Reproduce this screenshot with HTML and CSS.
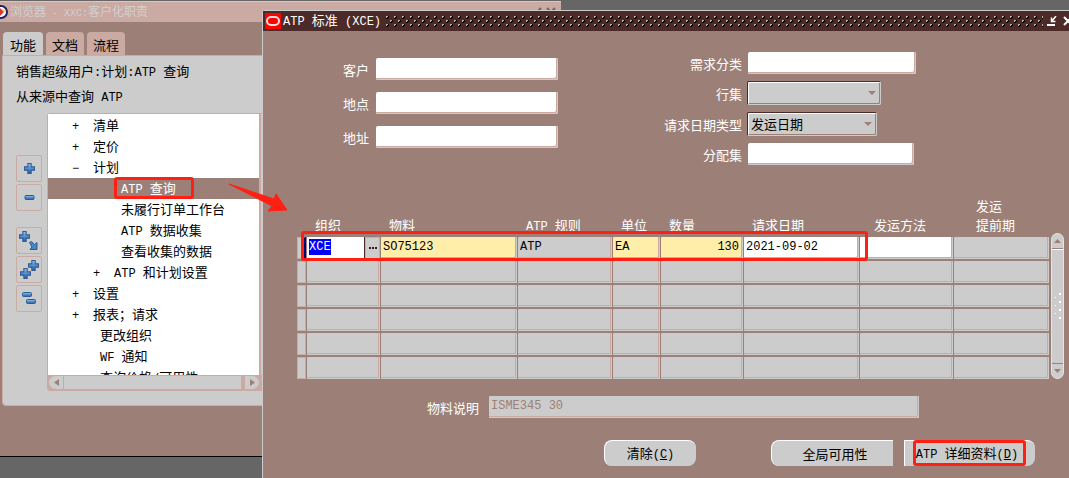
FILE: index.html
```html
<!DOCTYPE html>
<html lang="zh-CN">
<head>
<meta charset="utf-8">
<title>ATP 标准 (XCE)</title>
<link rel="stylesheet" href="styles.css">
</head>
<body>
<svg class="defs" aria-hidden="true">
  <defs>
    <linearGradient id="blue" x1="0" y1="0" x2="0" y2="1"><stop offset="0" stop-color="#9cc4ec"/><stop offset=".6" stop-color="#4a84c4"/><stop offset="1" stop-color="#2a5c9c"/></linearGradient>
    <pattern id="dots" width="8" height="8" patternUnits="userSpaceOnUse">
      <path d="M0 0h2v1h-1v1h-1zM4 4h2v1h-1v1h-1z" fill="#cbaaa2"/>
      <path d="M2 0h1v2h-1v1h-2v-1h1v-1h1zM6 4h1v2h-1v1h-2v-1h1v-1h1z" fill="#000"/>
    </pattern>
    <symbol id="plus" viewBox="0 0 10 10"><path d="M3.500.5h3v3h3v3h-3v3h-3v-3h-3v-3h3z" fill="url(#blue)" stroke="#2f5c94"/></symbol>
    <symbol id="minus" viewBox="0 0 10 5"><rect x=".5" y=".5" width="9" height="4" rx="1" fill="url(#blue)" stroke="#2f5c94"/></symbol>
  </defs>
</svg>
<main class="desktop">
  <section class="window navigator">
    <header class="nav-title">
      <svg class="globe" width="11" height="16" viewBox="0 0 11 16"><circle cx="1" cy="8" r="6" fill="#fff" stroke="#20206a" stroke-width="2"/><path d="M0 4l4 4-4 4z" fill="#d33"/><path d="M2 5l4 2-3 1z" fill="#e5bf35"/></svg>
      <span>浏览器<span class="lt"> - XXC:</span>客户化职责</span>
      <svg class="nav-controls" width="24" height="10" viewBox="0 0 24 10"><path d="M1 9h7M8 1L3 6M14 1l8 8M22 1l-8 8" stroke="#666" stroke-width="2" fill="none"/></svg>
    </header>
    <nav class="tabs">
      <button class="tab active">功能</button><button class="tab">文档</button><button class="tab">流程</button>
    </nav>
    <div class="panel">
      <p>销售超级用户<span class="lt">:</span>计划<span class="lt">:ATP </span>查询</p>
      <p>从来源中查询<span class="lt"> ATP</span></p>
      <div class="browse">
        <div class="tools">
          <button class="tool" aria-label="展开"><svg width="11" height="11"><use href="#plus"/></svg></button>
          <button class="tool" aria-label="折叠"><svg width="11" height="5"><use href="#minus"/></svg></button>
          <button class="tool spaced" aria-label="展开分支"><svg width="20" height="20" viewBox="0 0 20 20"><use href="#plus" width="11" height="11"/><path d="M10.500 11.500l2-1 3 3 2.500-2v7h-7l2-2.500z" fill="#4a84c4" stroke="#2f5c94"/></svg></button>
          <button class="tool" aria-label="全部展开"><svg width="20" height="20" viewBox="0 0 20 20"><use href="#plus" x="9" y="0" width="11" height="11"/><use href="#plus" x="1" y="8" width="11" height="11"/></svg></button>
          <button class="tool" aria-label="全部折叠"><svg width="16" height="14" viewBox="0 0 16 14"><use href="#minus" x="1" y="0" width="10" height="5"/><use href="#minus" x="5" y="7" width="10" height="5"/></svg></button>
        </div>
        <div class="listbox">
          <div class="list-main">
            <ul class="tree">
              <li><span class="mark">+</span>清单</li>
              <li><span class="mark">+</span>定价</li>
              <li><span class="mark">−</span>计划</li>
              <li class="leaf selected"><span class="lt">ATP </span>查询</li>
              <li class="leaf">未履行订单工作台</li>
              <li class="leaf"><span class="lt">ATP </span>数据收集</li>
              <li class="leaf">查看收集的数据</li>
              <li class="sub"><span class="mark">+</span><span class="lt">ATP </span>和计划设置</li>
              <li><span class="mark">+</span>设置</li>
              <li><span class="mark">+</span>报表；请求</li>
              <li class="direct">更改组织</li>
              <li class="direct"><span class="lt">WF </span>通知</li>
              <li class="direct">查询价格<span class="lt">/</span>可用性</li>
            </ul>
            <div class="vbar"></div>
          </div>
          <div class="hbar">
            <button class="arrow-left" aria-label="向左"><svg width="5" height="7"><path d="M5 0v7L0 3.500z" fill="#9c8077"/></svg></button>
            <div class="track"></div>
            <button class="arrow-right" aria-label="向右"><svg width="5" height="7"><path d="M0 0v7l5-3.500z" fill="#9c8077"/></svg></button>
          </div>
        </div>
      </div>
    </div>
  </section>

  <section class="window dialog">
    <header class="dialog-title">
      <svg width="16" height="16" viewBox="0 0 16 16"><path d="M0 0h16v16H0z" fill="#f00"/><rect x="2" y="4" width="12" height="8" rx="4" fill="none" stroke="#ecdcd8" stroke-width="2"/></svg>
      <h1><span class="lt">ATP </span>标准<span class="lt"> (XCE)</span></h1>
      <svg class="dots" height="11"><rect width="100%" height="11" fill="url(#dots)"/></svg>
      <svg width="10" height="10" viewBox="0 0 10 10"><path d="M0 9h8" stroke="#fff" stroke-width="2"/><path d="M9 0L5 5M4.500 1.500v4h4" stroke="#fff" stroke-width="1.500" fill="none"/></svg>
      <svg class="close" width="9" height="10" viewBox="0 0 9 10"><path d="M1 1l8 8M9 1L1 9" stroke="#fff" stroke-width="2"/></svg>
    </header>
    <form class="content" onsubmit="return false">
      <div class="forms">
        <div class="form-left">
          <label for="customer">客户</label><input class="field" id="customer">
          <label for="site">地点</label><input class="field" id="site">
          <label for="address">地址</label><input class="field" id="address">
        </div>
        <div class="form-right">
          <label for="demand">需求分类</label><input class="field" id="demand">
          <label for="lineset">行集</label><span class="pick wide"><select id="lineset"><option></option></select></span>
          <label for="datetype">请求日期类型</label><span class="pick"><select id="datetype"><option>发运日期</option></select></span>
          <label for="allocset">分配集</label><input class="field short" id="allocset">
        </div>
      </div>
      <div class="grid-wrap">
        <table class="grid">
          <colgroup><col class="c-mark"><col class="c-org"><col class="c-item"><col class="c-rule"><col class="c-unit"><col class="c-qty"><col class="c-date"><col class="c-method"><col class="c-lead"></colgroup>
          <thead>
            <tr><th></th><th>组织</th><th>物料</th><th><span class="lt">ATP </span>规则</th><th>单位</th><th>数量</th><th>请求日期</th><th class="inset">发运方法</th><th class="far">发运<br>提前期</th></tr>
          </thead>
          <tbody id="lines">
            <tr>
              <td><button class="row-mark current" aria-label="当前行"></button></td>
              <td><div class="lov"><span class="org" role="textbox"><mark>XCE</mark></span><button aria-label="组织列表"><svg width="10" height="3"><path d="M1 0h2v2H1zM4 0h2v2H4zM7 0h2v2H7z" fill="#3c1512"/></svg></button></div></td>
              <td><input class="cell required" aria-label="物料" value="SO75123"></td>
              <td><input class="cell" aria-label="ATP 规则" value="ATP"></td>
              <td><input class="cell required" aria-label="单位" value="EA"></td>
              <td><input class="cell required number" aria-label="数量" value="130"></td>
              <td><input class="cell open" aria-label="请求日期" value="2021-09-02"></td>
              <td><input class="cell open" aria-label="发运方法"></td>
              <td><input class="cell" aria-label="提前期"></td>
            </tr>
          </tbody>
        </table>
        <div class="scroll">
          <button aria-label="向上"><svg width="7" height="4"><path d="M0 4h7L3.500 0z" fill="#9c8077"/></svg></button>
          <div class="thumb"><svg width="8" height="28" viewBox="0 0 8 28"><path d="M1 5h1v1H1zM5 1h2v2H5zM1 13h1v1H1zM5 9h2v2H5zM1 21h1v1H1zM5 17h2v2H5zM5 25h2v2H5z" fill="#fff"/></svg></div>
          <button aria-label="向下"><svg width="7" height="4"><path d="M0 0h7L3.500 4z" fill="#9c8077"/></svg></button>
        </div>
        <div class="callout row-callout"></div>
      </div>
      <div class="describe">
        <label for="desc">物料说明</label><input class="cell" id="desc" value="ISME345 30" readonly>
      </div>
      <div class="actions">
        <button class="action clear">清除<span class="lt">(<u>C</u>)</span></button>
        <button class="action global">全局可用性</button>
        <button class="action detail"><span class="lt">ATP </span>详细资料<span class="lt">(<u>D</u>)</span><span class="callout button-callout"></span></button>
      </div>
    </form>
  </section>
  <div class="callout tree-callout"></div>
  <svg class="pointer" width="60" height="30" viewBox="0 0 60 30"><path d="M1 1l45 15 2-5 11 16-19 1 4-5z" fill="#ff2014" stroke="#ff2014" stroke-linejoin="round"/></svg>
</main>
<script src="grid.js"></script>
</body>
</html>
```
FILE: styles.css
```css
* { box-sizing: border-box; }
:root {
  --body: #9c8077;
  --pink: #cbaaa3;
  --grey: #ccc;
  --dark: #4c2a27;
  --red: #ff2014;
}
body {
  margin: 0;
  background: #666;
  font: 13px/19px "Noto Sans CJK SC", sans-serif;
  color: #000;
}
button, input, select {
  font: inherit;
  color: inherit;
  margin: 0;
  padding: 0;
  border: 0;
  border-radius: 0;
  outline: 0;
}
p, h1, ul { margin: 0; padding: 0; font: inherit; }
svg { display: block; flex: none; }
.defs { position: absolute; width: 0; height: 0; }
.lt, .mark, .cell, .org {
  font-family: "Liberation Mono", "Noto Sans CJK SC", monospace;
  font-size: 12px;
  white-space: pre;
}
.desktop { position: relative; min-height: 100vh; overflow: hidden; }
.window { position: absolute; }

.navigator {
  left: 0;
  top: 1px;
  width: 561px;
  height: 456px;
  background: var(--body);
  border-top: 1px solid var(--grey);
  border-bottom: 1px solid #000;
}
.nav-title {
  display: flex;
  align-items: center;
  height: 20px;
  background: var(--pink);
  color: #d0d0d0;
  font-size: 12px;
}
.nav-title .lt { font-size: 10px; }
.globe { margin-right: -1px; }
.nav-controls { margin-left: auto; margin-right: 4px; }
.tabs { display: flex; gap: 3px; padding: 10px 0 0 3px; }
.tab {
  width: 38px;
  height: 23px;
  padding-top: 1px;
  background: var(--pink);
  border-radius: 4px 4px 0 0;
}
.tab.active { width: 40px; background: var(--grey); }
.panel {
  margin: 0 6px 0 2px;
  padding: 5px 14px 14px 13px;
  background: var(--grey);
  border: 1px solid var(--pink);
  border-radius: 0 0 4px 4px;
}
.panel > p { margin-bottom: 6px; height: 19px; }
.browse { display: flex; gap: 5px; padding-top: 2px; }
.tools { display: flex; flex-direction: column; gap: 2px; padding-top: 42px; }
.tool {
  display: flex;
  align-items: center;
  justify-content: center;
  width: 26px;
  height: 27px;
  background: var(--grey);
  border: 1px solid var(--pink);
  border-radius: 2px;
}
.tool.spaced { margin-top: 14px; }
.listbox {
  flex: 1;
  border: 1px solid var(--pink);
  border-radius: 3px 0 0 3px;
}
.list-main { display: flex; height: 261px; }
.tree {
  width: 211px;
  padding-top: 1px;
  overflow: hidden;
  background: #fff;
  list-style: none;
}
.tree li { height: 21px; line-height: 20px; padding-left: 24px; white-space: nowrap; }
.tree .mark { display: inline-block; width: 21px; }
.tree .leaf { padding-left: 73px; }
.tree .sub { padding-left: 45px; }
.tree .direct { padding-left: 52px; }
.tree .selected { background: var(--body); color: #fff; }
.vbar { flex: 1; border-left: 2px solid var(--pink); }
.hbar {
  display: flex;
  gap: 1px;
  width: 214px;
  height: 15px;
  padding: 1px 3px 1px 1px;
  background: var(--pink);
}
.hbar button { display: flex; align-items: center; justify-content: center; width: 14px; background: var(--grey); }
.arrow-left { border-radius: 7px 0 0 7px; }
.arrow-right { border-radius: 0 7px 7px 0; }
.hbar .track { flex: 1; margin-right: 3px; background: var(--grey); }

.dialog {
  left: 262px;
  top: 10px;
  right: 0;
  bottom: 0;
  background: var(--body);
  border-top: 1px solid var(--grey);
  border-left: 1px solid var(--grey);
  border-radius: 3px 0 0 0;
  color: #fff;
}
.dialog-title {
  display: flex;
  align-items: center;
  height: 20px;
  padding-left: 2px;
  overflow: hidden;
  background: var(--dark);
}
.dialog-title h1 { margin: 0 5px 0 2px; white-space: nowrap; }
.dots { flex: 1; min-width: 0; margin-right: 4px; }
.close { margin: 0 -3px 0 6px; }
.forms { display: flex; gap: 106px; padding: 21px 0 0 80px; }
.form-left, .form-right {
  display: grid;
  align-content: start;
  align-items: center;
}
.form-left { grid-template-columns: 25px 182px; gap: 12px 8px; padding-top: 6px; }
.form-right { grid-template-columns: 78px 168px; gap: 7px 6px; }
.forms label { text-align: right; white-space: nowrap; }
.field {
  width: 100%;
  height: 22px;
  padding: 0 3px;
  color: #000;
  background: #fff;
  border-radius: 2px;
  box-shadow: inset -1px -1px 0 var(--grey), inset -2px -2px 0 var(--pink);
}
.field.short { width: 166px; }
.pick {
  position: relative;
  width: 130px;
  height: 24px;
  margin-left: -1px;
  background: var(--grey);
  border: 1px solid;
  border-color: var(--dark) var(--grey) var(--grey) var(--dark);
  border-radius: 2px;
  box-shadow: inset 1px 1px 0 #fff, inset -1px -1px 0 var(--body);
}
.pick.wide { width: 134px; }
.pick::after {
  content: "";
  position: absolute;
  right: 4px;
  top: 9px;
  border: 4px solid transparent;
  border-top-color: var(--body);
  border-bottom: 0;
}
.pick select { appearance: none; display: block; width: 100%; height: 20px; padding-left: 3px; background: none; color: #000; }

.grid-wrap { position: relative; display: flex; margin: 30px 5px 0 34px; }
.grid {
  flex: 1;
  width: 100%;
  table-layout: fixed;
  border-collapse: collapse;
}
.c-mark { width: 10px; }
.c-org { width: 74px; }
.c-item { width: 137px; }
.c-rule { width: 95px; }
.c-unit { width: 48px; }
.c-qty { width: 83px; }
.c-date { width: 116px; }
.c-method { width: 94px; }
.c-lead { width: 96px; }
.grid th {
  height: 42px;
  padding: 0 0 3px 8px;
  text-align: left;
  vertical-align: bottom;
  font-weight: 400;
  white-space: nowrap;
}
.grid th .lt { line-height: 1; }
.grid th.inset { padding-left: 14px; }
.grid th.far { padding-left: 22px; }
.grid td { padding: 0 1px 2px 0; height: 24px; }
.cell {
  display: block;
  width: 100%;
  height: 22px;
  padding: 0 4px 2px 2px;
  color: #000;
  background: var(--grey);
  border-radius: 1px;
  box-shadow: inset -1px -1px 0 var(--grey), inset -2px -2px 0 var(--pink);
}
.cell.required { background: #ffeeaa; }
.cell.open { background: #fff; }
.cell.number { text-align: right; }
.row-mark {
  display: block;
  width: 9px;
  height: 22px;
  background: var(--grey);
  border: 1px solid var(--pink);
}
.row-mark.current { border-right: 3px solid #00007b; }
.lov { display: flex; height: 22px; color: #000; }
.org { flex: 1; padding: 0 2px; background: #fff; border-right: 1px solid var(--dark); }
.org mark { display: inline-block; height: 16px; margin-top: 2px; line-height: 16px; background: #00f; color: #fff; }
.lov button {
  display: flex;
  align-items: center;
  justify-content: center;
  width: 15px;
  background: var(--grey);
  border: 1px solid var(--pink);
}
.scroll {
  display: flex;
  flex-direction: column;
  width: 14px;
  margin: 38px 0 2px 1px;
  background: var(--grey);
  border: 1px solid #e4e4e4;
  border-radius: 7px;
  overflow: hidden;
}
.scroll button { display: flex; align-items: center; justify-content: center; height: 14px; background: none; }
.thumb {
  flex: 1;
  display: flex;
  align-items: center;
  justify-content: center;
  border: 1px solid var(--body);
  border-width: 1px 0;
  box-shadow: inset 0 1px 0 #fff;
}
.describe { display: flex; align-items: center; gap: 10px; margin: 15px 0 0 164px; }
.describe .cell { width: 430px; color: var(--body); }
.actions { display: flex; justify-content: flex-end; margin: 22px 34px 0 0; gap: 11px; }
.action {
  position: relative;
  height: 26px;
  background: var(--grey);
  color: #000;
  border-top: 1px solid #fff;
  border-left: 1px solid #fff;
  white-space: nowrap;
}
.action.clear { width: 92px; margin-right: 64px; border-radius: 8px; }
.action.global { width: 122px; padding-left: 5px; border-radius: 8px 0 0 8px; }
.action.detail { width: 131px; padding-right: 6px; border-radius: 0 8px 8px 0; }

.callout {
  position: absolute;
  border: 3px solid var(--red);
  border-radius: 3px;
  pointer-events: none;
}
.row-callout { left: 4px; right: 196px; top: 36px; height: 30px; }
.button-callout { left: 8px; right: 9px; top: -1px; bottom: 0; }
.tree-callout { left: 114px; top: 177px; width: 80px; height: 22px; }
.pointer { position: absolute; left: 228px; top: 183px; }
```
FILE: grid.js
```js
const lines = document.getElementById("lines");
const labels = ["组织", "物料", "ATP 规则", "单位", "数量", "请求日期", "发运方法", "提前期"];
for (let line = 2; line <= 6; line++) {
  const row = lines.insertRow();
  row.insertCell().innerHTML = `<button class="row-mark" aria-label="第 ${line} 行"></button>`;
  for (const label of labels) {
    row.insertCell().innerHTML = `<input class="cell" aria-label="${label} ${line}">`;
  }
}
```
